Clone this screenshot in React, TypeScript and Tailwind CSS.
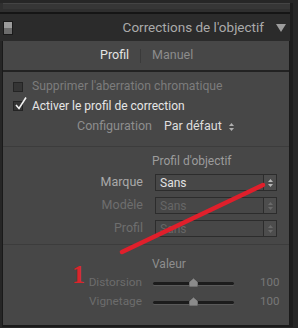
import React from "react";

const FONT = { fontFamily: 'Roboto, "Open Sans", sans-serif' };

function UpDown({ className = "" }: { className?: string }) {
  return (
    <svg width="5" height="8" viewBox="0 0 5 8" className={className} aria-hidden>
      <path d="M2.5 0 L5 3 L0 3 Z" fill="currentColor" />
      <path d="M0 5 L5 5 L2.5 8 Z" fill="currentColor" />
    </svg>
  );
}

function Select({ value, disabled }: { value: string; disabled?: boolean }) {
  return (
    <div className="flex h-[17px] w-[122px] border border-[#2c2c2c] bg-[#474747]">
      <div
        className={
          "flex flex-1 items-center pl-[4px] text-[12px] " +
          (disabled ? "text-[#666]" : "text-[#e2e2e2]")
        }
      >
        {value}
      </div>
      <div className="flex w-[13px] items-center justify-center border-l border-[#2c2c2c] bg-[#4d4d4d]">
        <UpDown className={disabled ? "text-[#6a6a6a]" : "text-[#b8b8b8]"} />
      </div>
    </div>
  );
}

function Slider() {
  return (
    <div className="relative h-[10px] w-[81px]">
      <div className="absolute left-0 right-0 top-[4px] h-[3px] rounded-full bg-[#1c1c1c] shadow-[0_1px_0_#5a5a5a]" />
      <svg width="9" height="9" viewBox="0 0 9 9" className="absolute left-[36px] top-0" aria-hidden>
        <path d="M4.5 0 L9 4 L9 9 L0 9 L0 4 Z" fill="#8a8a8a" stroke="#333" strokeWidth="0.6" />
      </svg>
    </div>
  );
}

function LensRow({ label, value, disabled }: { label: string; value: string; disabled?: boolean }) {
  return (
    <div className="flex h-[17px] items-center">
      <span
        className={
          "w-[141px] pr-[1px] text-right text-[12.5px] " +
          (disabled ? "text-[#6e6e6e]" : "text-[#a9a9a9]")
        }
      >
        {label}
      </span>
      <div className="ml-[11px]">
        <Select value={value} disabled={disabled} />
      </div>
    </div>
  );
}

function SliderRow({ label }: { label: string }) {
  return (
    <div className="flex h-[19px] items-center">
      <span className="w-[140px] pr-[1px] text-right text-[11.8px] text-[#6c6c6c]">{label}</span>
      <div className="ml-[10px]">
        <Slider />
      </div>
      <span className="ml-[26px] w-[18px] text-right text-[11.5px] text-[#777]">100</span>
    </div>
  );
}

export default function App() {
  return (
    <div className="relative h-[328px] w-[298px] overflow-hidden bg-[#262626] select-none" style={FONT}>
      <div className="w-[293px] border-r-[3px] border-[#1c1c1c]">
        {/* bout du panneau précédent */}
        <div className="h-[11px] border-b-2 border-[#151515] bg-[#2f2f2f]">
          <div className="ml-[3px] mt-[3px] h-[6px] border-t border-[#444] bg-[#363636]" />
        </div>

        {/* en-tête */}
        <div className="flex h-[27px] items-center bg-[#2b2b2b]">
          <div className="ml-[3px] flex h-[14px] w-[10px] flex-col border border-[#1a1a1a]">
            <div className="h-1/2 bg-[#9c9c9c]" />
            <div className="h-1/2 bg-[#6c6c6c]" />
          </div>
          <span className="ml-auto text-[13.5px] leading-none text-[#aaaaaa]">Corrections de l'objectif</span>
          <svg width="10" height="8" viewBox="0 0 10 8" className="ml-[12px] mr-[4px]" aria-hidden>
            <path d="M0 0 L10 0 L5 8 Z" fill="#9d9d9d" />
          </svg>
        </div>

        {/* panneau */}
        <div className="ml-[2px] h-[286px] border-x border-b-2 border-[#1a1a1a] bg-[#474747]">
          <div className="flex h-[31px] items-center border-b-2 border-[#222] text-[12.5px]">
            <span className="ml-[97px] text-[#e4e4e4]">Profil</span>
            <span className="ml-[11px] h-[14px] w-px bg-[#3a3a3a]" />
            <span className="ml-[11px] text-[#8c8c8c]">Manuel</span>
          </div>

          <div className="h-[75px] border-b border-[#3c3c3c] pt-[5px]">
            <div className="flex h-[19px] items-center">
              <span className="ml-[10px] h-[10px] w-[10px] border border-[#242424] bg-[#353535]" />
              <span className="ml-[9px] text-[12.2px] text-[#7c7c7c]">Supprimer l'aberration chromatique</span>
            </div>
            <div className="flex h-[19px] items-center">
              <span className="relative ml-[10px] h-[10px] w-[10px] border border-[#242424] bg-[#353535]">
                <svg width="12" height="13" viewBox="0 0 12 13" className="absolute left-[1px] top-[-5px]" aria-hidden>
                  <path d="M1 8 L4 11.5 L11 0.5" fill="none" stroke="#f2f2f2" strokeWidth="1.6" />
                </svg>
              </span>
              <span className="ml-[9px] text-[12px] text-[#e6e6e6]">Activer le profil de correction</span>
            </div>
            <div className="mt-[2px] flex h-[19px] items-center text-[12.5px]">
              <span className="ml-[74px] text-[#8e8e8e]">Configuration</span>
              <span className="ml-[12px] text-[#dedede]">Par défaut</span>
              <UpDown className="ml-[7px] text-[#b0b0b0]" />
            </div>
          </div>

          <div className="flex h-[98px] flex-col gap-[6px] border-b border-[#3c3c3c] pt-[5px]">
            <div className="flex h-[18px] items-center">
              <span className="ml-[149px] text-[12px] text-[#9c9c9c]">Profil d'objectif</span>
            </div>
            <div className="-mt-[2px]">
              <LensRow label="Marque" value="Sans" />
            </div>
            <LensRow label="Modèle" value="Sans" disabled />
            <LensRow label="Profil" value="Sans" disabled />
          </div>

          <div className="pt-[9px]">
            <div className="flex h-[19px] items-center">
              <span className="ml-[149px] text-[12px] text-[#8e8e8e]">Valeur</span>
            </div>
            <SliderRow label="Distorsion" />
            <SliderRow label="Vignetage" />
          </div>
        </div>
      </div>

      {/* annotation */}
      <svg width="298" height="328" className="pointer-events-none absolute left-0 top-0" aria-hidden>
        <line x1="263" y1="185" x2="122" y2="252" stroke="#e01f2b" strokeWidth="4.5" strokeLinecap="round" />
      </svg>
      <span
        className="absolute left-[72px] top-[262px] text-[26px] font-bold leading-none text-[#d8262c]"
        style={{ fontFamily: '"Liberation Serif", serif' }}
      >
        1
      </span>
    </div>
  );
}
